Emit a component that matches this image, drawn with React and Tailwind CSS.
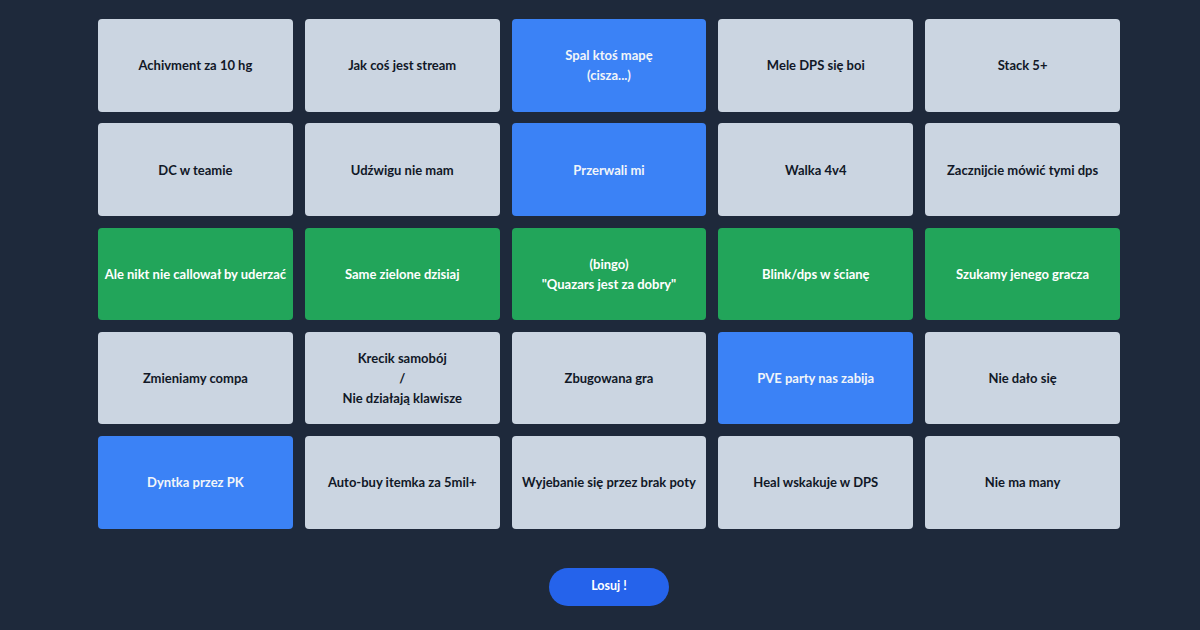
const cells = [
  ['Achivment za 10 hg', 'gray'],
  ['Jak coś jest stream', 'gray'],
  ['Spal ktoś mapę\n(cisza...)', 'blue'],
  ['Mele DPS się boi', 'gray'],
  ['Stack 5+', 'gray'],
  ['DC w teamie', 'gray'],
  ['Udźwigu nie mam', 'gray'],
  ['Przerwali mi', 'blue'],
  ['Walka 4v4', 'gray'],
  ['Zacznijcie mówić tymi dps', 'gray'],
  ['Ale nikt nie callował by uderzać', 'green'],
  ['Same zielone dzisiaj', 'green'],
  ['(bingo)\n"Quazars jest za dobry"', 'green'],
  ['Blink/dps w ścianę', 'green'],
  ['Szukamy jenego gracza', 'green'],
  ['Zmieniamy compa', 'gray'],
  ['Krecik samobój\n/\nNie działają klawisze', 'gray'],
  ['Zbugowana gra', 'gray'],
  ['PVE party nas zabija', 'blue'],
  ['Nie dało się', 'gray'],
  ['Dyntka przez PK', 'blue'],
  ['Auto-buy itemka za 5mil+', 'gray'],
  ['Wyjebanie się przez brak poty', 'gray'],
  ['Heal wskakuje w DPS', 'gray'],
  ['Nie ma many', 'gray'],
]

const colorClass = {
  gray: 'bg-[#cbd5e1] text-[#111827]',
  blue: 'bg-[#3b82f6] text-[#f1f5f9]',
  green: 'bg-[#22a55a] text-white',
}

export default function App() {
  return (
    <div className="min-h-screen bg-[#1e293b] pl-[18px] pt-[19px] font-['Lato',sans-serif]">
      <div className="flex flex-col items-center">
        <div className="grid w-[1022px] grid-cols-5 gap-x-3 gap-y-[11.75px]">
          {cells.map(([text, c], i) => (
            <div
              key={i}
              className={`flex h-[92.5px] items-center justify-center rounded px-0.5 text-center text-[13px] font-bold leading-5 whitespace-pre-line ${colorClass[c]}`}
            >
              {text}
            </div>
          ))}
        </div>
        <button className="mt-[39px] h-[38px] w-[120px] rounded-full bg-[#2563eb] text-[12.5px] font-bold text-white">
          Losuj !
        </button>
      </div>
    </div>
  )
}
